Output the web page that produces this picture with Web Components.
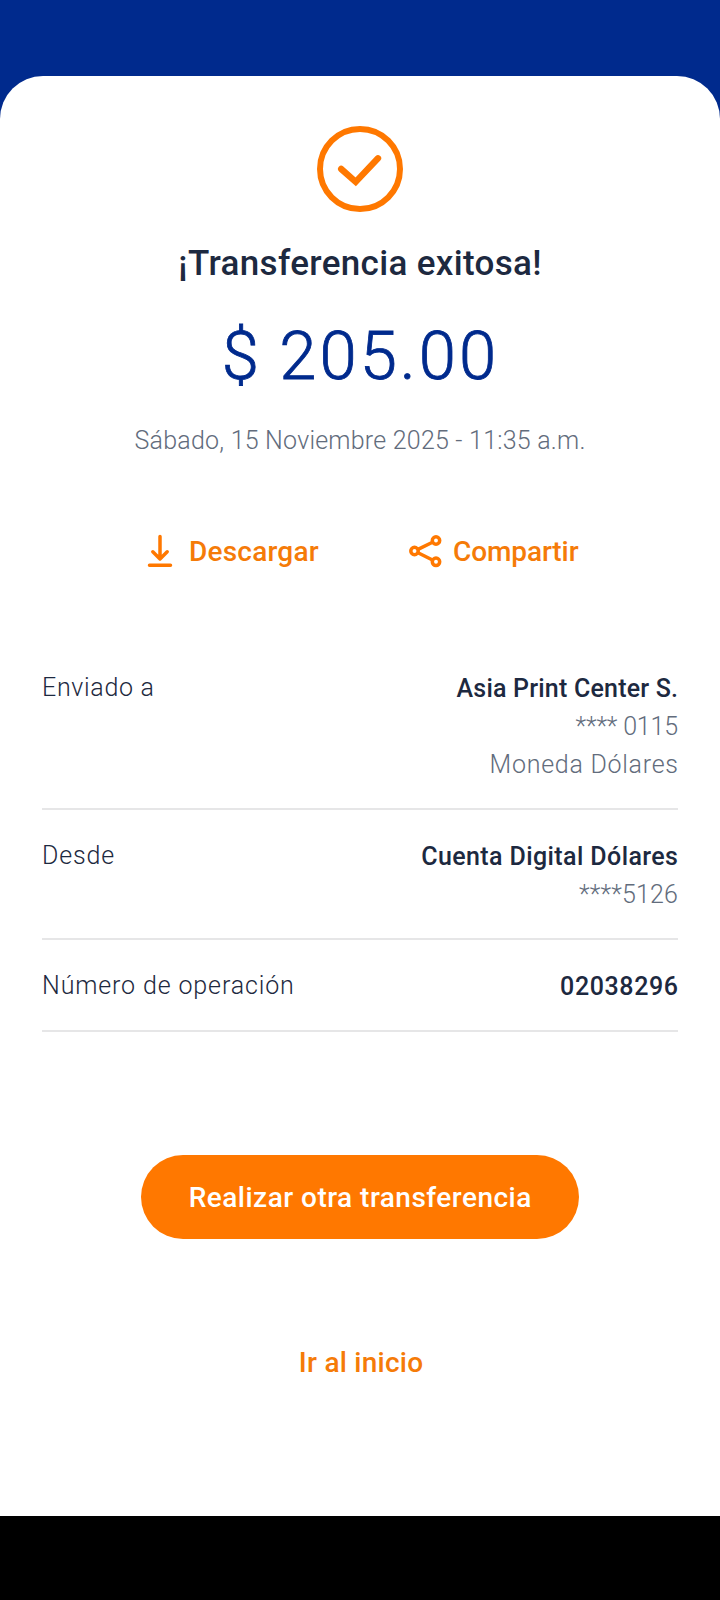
<!DOCTYPE html>
<html lang="es">
<head>
<meta charset="utf-8">
<title>Transferencia exitosa</title>
<style>
  html, body { margin: 0; background: #000; }
  body { font-family: Roboto, "Liberation Sans", sans-serif; color: #1d2940; }
</style>
</head>
<body>
<transfer-screen>
  <success-summary>
    <spaced-text slot="title" style="--ls:.34px">¡Transferencia exitosa!</spaced-text>
    <spaced-text slot="amount" style="--ls:3px">$ 205.00</spaced-text>
    <spaced-text slot="date" style="--ls:.22px">Sábado, 15 Noviembre 2025 - 11:35 a.m.</spaced-text>
  </success-summary>
  <action-bar>
    <icon-action icon="download"><spaced-text style="--ls:.22px">Descargar</spaced-text></icon-action>
    <icon-action icon="share"><spaced-text style="--ls:-.1px">Compartir</spaced-text></icon-action>
  </action-bar>
  <detail-list>
    <detail-row>
      <spaced-text slot="label" style="--ls:.68px">Enviado a</spaced-text>
      <spaced-text slot="value" style="--ls:.2px">Asia Print Center S.</spaced-text>
      <spaced-text style="--ls:-.2px">**** 0115</spaced-text>
      <spaced-text style="--ls:.73px">Moneda Dólares</spaced-text>
    </detail-row>
    <detail-row>
      <spaced-text slot="label" style="--ls:.85px">Desde</spaced-text>
      <spaced-text slot="value" style="--ls:.4px">Cuenta Digital Dólares</spaced-text>
      <spaced-text style="--ls:.14px">****5126</spaced-text>
    </detail-row>
    <detail-row>
      <spaced-text slot="label" style="--ls:.87px">Número de operación</spaced-text>
      <spaced-text slot="value" style="--ls:.6px">02038296</spaced-text>
    </detail-row>
  </detail-list>
  <pill-button><spaced-text style="--ls:.48px">Realizar otra transferencia</spaced-text></pill-button>
  <text-link><spaced-text style="--ls:.26px">Ir al inicio</spaced-text></text-link>
</transfer-screen>

<script>
const define = (name, html, setup) => {
  const template = document.createElement('template');
  template.innerHTML = html;
  customElements.define(name, class extends HTMLElement {
    connectedCallback() {
      if (this.shadowRoot) return;
      this.attachShadow({ mode: 'open' }).append(template.content.cloneNode(true));
      if (setup) setup(this);
    }
  });
};

// Letter-spaced run whose trailing space is cancelled, so edges stay aligned.
define('spaced-text', `
  <style>
    :host { display: block; white-space: nowrap; }
    span { display: inline-block; letter-spacing: var(--ls, 0); margin-right: calc(-1 * var(--ls, 0px)); }
  </style><span><slot></slot></span>`);

define('transfer-screen', `
  <style>
    :host { display: block; width: 720px; height: 1516px; padding-top: 76px; box-sizing: border-box; background: #002a8d; }
    main { display: flex; flex-direction: column; align-items: center; box-sizing: border-box; height: 1440px;
      padding-top: 50px; background: #fff; border-radius: 43px 43px 0 0; }
  </style><main><slot></slot></main>`);

define('success-summary', `
  <style>
    :host { display: flex; flex-direction: column; align-items: center; }
    svg { display: block; width: 86px; height: 86px; }
    .title { margin-top: 31px; font-size: 35px; font-weight: 500; line-height: 42px; }
    .amount { margin-top: 31px; margin-right: 2px; font-size: 67px; font-weight: 300; line-height: 80px; color: #002a8d;
      word-spacing: -2px; -webkit-text-stroke: .8px #002a8d; }
    .date { margin-top: 26px; font-size: 25px; font-weight: 300; line-height: 38px; color: #626c7c; }
  </style>
  <svg viewBox="0 0 86 86" fill="none" stroke="#ff7800">
    <circle cx="43" cy="43" r="40" stroke-width="6"/>
    <path d="M24.200 43 38.700 55.900 61 32.300" stroke-width="6.400" stroke-linecap="round"/>
  </svg>
  <div class="title"><slot name="title"></slot></div>
  <div class="amount"><slot name="amount"></slot></div>
  <div class="date"><slot name="date"></slot></div>`);

define('action-bar', `
  <style>
    :host { display: grid; grid-template-columns: 265px 1fr; align-self: stretch; margin-top: 71px; padding-left: 143px; }
  </style><slot></slot>`);

const glyphs = {
  download: '<path d="M17 5.500V27M9.800 20.800 17 28 24.200 20.800M6.500 34.200H27.500" stroke-linecap="round" stroke-linejoin="round"/>',
  share: '<circle cx="6.500" cy="20" r="3.700"/><circle cx="28" cy="9.500" r="3.700"/><circle cx="28" cy="30.800" r="3.700"/><path d="M10 18.400 24.500 11.200M10 21.700 24.500 29"/>'
};
define('icon-action', `
  <style>
    :host { display: flex; gap: 12px; font-size: 28px; font-weight: 500; line-height: 40px; color: #f57b08; }
    :host([icon="share"]) { gap: 11px; }
    svg { display: block; width: 34px; height: 40px; }
    slot { display: block; padding-top: 1px; margin-bottom: -1px; }
  </style>
  <svg viewBox="0 0 34 40" fill="none" stroke="#ff7800" stroke-width="3.500"></svg>
  <slot></slot>`,
  el => { el.shadowRoot.querySelector('svg').innerHTML = glyphs[el.getAttribute('icon')]; });

define('detail-list', `
  <style>
    :host { display: block; align-self: stretch; margin: 71px 42px 0; }
  </style><slot></slot>`);

define('detail-row', `
  <style>
    :host { display: flex; justify-content: space-between; padding: 28px 0 24px; border-bottom: 2px solid #e6e6e7;
      font-size: 25px; font-weight: 300; line-height: 38px; }
    .label { margin-top: -1px; }
    .values { display: flex; flex-direction: column; align-items: flex-end; color: #626c7c; }
    slot[name="value"] { font-weight: 500; color: #1d2940; }
  </style>
  <div class="label"><slot name="label"></slot></div>
  <div class="values"><slot name="value"></slot><slot></slot></div>`);

define('pill-button', `
  <style>
    :host { display: flex; align-items: center; justify-content: center; box-sizing: border-box; width: 438px; height: 84px;
      padding-top: 2px; margin-top: 123px; border-radius: 42px; background: #ff7800; color: #fff;
      font-size: 28px; font-weight: 500; line-height: 40px; }
  </style><slot></slot>`);

define('text-link', `
  <style>
    :host { display: block; margin: 104px 0 0 2px; font-size: 28px; font-weight: 500; line-height: 40px; color: #f57b08; }
  </style><slot></slot>`);
</script>
</body>
</html>
